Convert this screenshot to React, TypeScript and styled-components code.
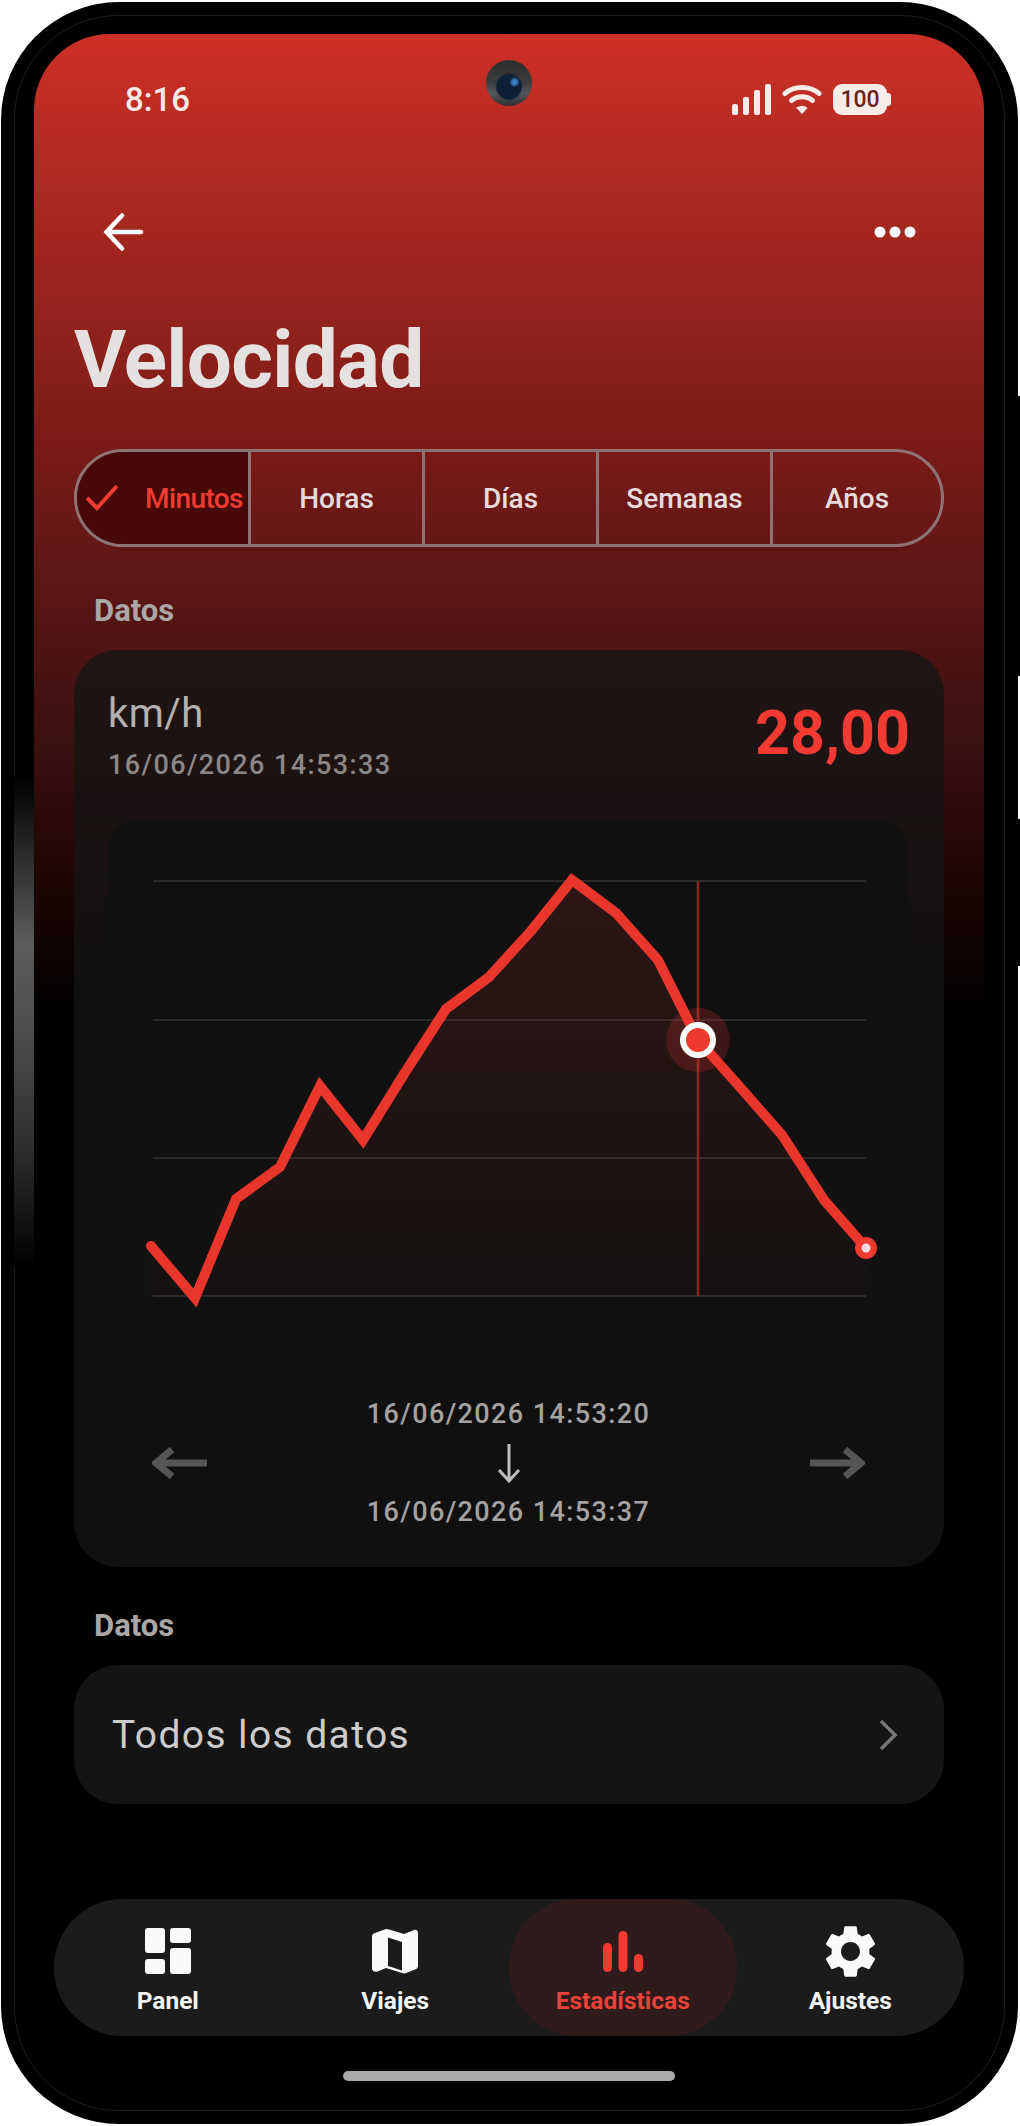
import React from 'react'
import styled, { createGlobalStyle } from 'styled-components'
import { MdSettings } from 'react-icons/md'

const GlobalStyle = createGlobalStyle`
  html, body {
    margin: 0;
    padding: 0;
    background: #fff;
  }
  * {
    box-sizing: border-box;
  }
`

const Page = styled.div`
  width: 1020px;
  height: 2126px;
  padding: 2px 2px 2px 1px;
  background: #fff;
  font-family: Roboto, "Liberation Sans", sans-serif;
`

const Phone = styled.div`
  position: relative;
  width: 1017px;
  height: 2122px;
  padding: 32px 34px 32px 33px;
  background: #000;
  border-radius: 118px;
`

const BezelLine = styled.div`
  position: absolute;
  inset: 13px;
  border: 1px solid #1e1e1e;
  border-radius: 104px;
  pointer-events: none;
`

const BezelGlow = styled.div`
  position: absolute;
  left: 13px;
  top: 775px;
  width: 20px;
  height: 490px;
  background: linear-gradient(180deg, #000 0%, #3b3b3b 22%, #5c5c5c 34%, #4a4a4a 55%, #2a2a2a 78%, #000 100%);
`

const SideButton = styled.div<{ $top: number; $height: number }>`
  position: absolute;
  right: -2px;
  top: ${props => props.$top}px;
  width: 3px;
  height: ${props => props.$height}px;
  background: #000;
`

const Screen = styled.div`
  position: relative;
  height: 100%;
  padding: 0 40px;
  display: flex;
  flex-direction: column;
  border-radius: 76px;
  overflow: hidden;
  background: linear-gradient(180deg, #cd2f26 0px, #a72820 180px, #7c1b18 400px, #551514 580px, #3d1110 700px, #230706 820px, #0f0202 920px, #000 975px);
`

const StatusBar = styled.div`
  height: 130px;
  padding: 0 93px 0 91px;
  margin: 0 -40px;
  display: flex;
  align-items: center;
  justify-content: space-between;
  color: #f6e9e7;
  font-size: 33px;
  font-weight: 500;
`

const StatusIcons = styled.div`
  display: flex;
  align-items: center;
  gap: 11px;
`

const Battery = styled.div`
  position: relative;
  width: 54px;
  height: 31px;
  margin-right: 4px;
  border-radius: 9px;
  background: #f8ece9;
  color: #6b2320;
  font-size: 23px;
  font-weight: 500;
  line-height: 31px;
  text-align: center;
  &::after {
    content: '';
    position: absolute;
    right: -4px;
    top: 9px;
    width: 4px;
    height: 13px;
    border-radius: 0 3px 3px 0;
    background: #f8ece9;
  }
`

const Camera = styled.div`
  position: absolute;
  left: 452px;
  top: 26px;
  width: 46px;
  height: 46px;
  border-radius: 50%;
  background:
    radial-gradient(circle at 62% 48%, #4a93d4 0, #2f6ea8 3px, transparent 5px),
    radial-gradient(circle at 50% 58%, #0e2036 0, #0e2036 12px, transparent 14px),
    linear-gradient(180deg, #2a2c2e 0%, #3c3e40 50%, #55585a 72%, #2c2e30 100%);
`

const TopBar = styled.div`
  height: 136px;
  padding: 0 27px 0 26px;
  display: flex;
  align-items: center;
  justify-content: space-between;
`

const Title = styled.h1`
  margin: 0;
  height: 114px;
  padding-top: 11px;
  font-size: 80px;
  line-height: 98px;
  font-weight: 700;
  letter-spacing: -0.7px;
  color: #e4e1e0;
`

const Segments = styled.div`
  height: 98px;
  margin-top: 35px;
  display: grid;
  grid-template-columns: 171px repeat(3, 174px) 171px;
  border: 3px solid #8d7473;
  border-radius: 49px;
  overflow: hidden;
`

const Segment = styled.div<{ $active?: boolean }>`
  display: flex;
  align-items: center;
  justify-content: ${props => (props.$active ? 'flex-start' : 'center')};
  gap: 27px;
  padding-left: ${props => (props.$active ? '9px' : '0')};
  border-left: ${props => (props.$active ? 'none' : '3px solid #8d7473')};
  background: ${props => (props.$active ? '#470907' : 'transparent')};
  color: ${props => (props.$active ? '#ee3c34' : '#e6dcdb')};
  font-size: 28px;
  font-weight: 500;
  letter-spacing: ${props => (props.$active ? '-0.6px' : '0')};
  white-space: nowrap;
`

const SectionLabel = styled.div`
  height: 40px;
  padding-left: 20px;
  color: #aba7a7;
  font-size: 31px;
  font-weight: 700;
  line-height: 40px;
`

const DataLabel = styled(SectionLabel)`
  margin-top: 44px;
  margin-bottom: 19px;
`

const LowerLabel = styled(SectionLabel)`
  margin-top: 39px;
  margin-bottom: 19px;
`

const Card = styled.div`
  height: 917px;
  padding: 34px 36px 0 34px;
  border-radius: 44px;
  background: rgba(21, 21, 21, 0.78);
`

const CardHead = styled.div`
  height: 136px;
  display: flex;
  justify-content: space-between;
`

const Unit = styled.div`
  margin-top: 2px;
  color: #b4b1b1;
  font-size: 40px;
  line-height: 56px;
  letter-spacing: 0.5px;
`

const Stamp = styled.div`
  margin-top: 6px;
  color: #8b8787;
  font-size: 27px;
  font-weight: 500;
  line-height: 34px;
  letter-spacing: 1.4px;
`

const Reading = styled.div`
  margin-top: 15px;
  margin-right: -2px;
  color: #f13a32;
  font-size: 61px;
  font-weight: 700;
  line-height: 68px;
`

const ChartPanel = styled.div`
  height: 540px;
  border-radius: 30px;
  background: linear-gradient(180deg, #101010 0%, #111 85%, rgba(20, 20, 20, 0) 100%);
`

const ChartSvg = styled.svg`
  display: block;
  width: 800px;
  height: 520px;
`

const RangeRow = styled.div`
  height: 150px;
  margin-top: 28px;
  padding: 0 43px 0 44px;
  display: flex;
  align-items: center;
  justify-content: space-between;
`

const RangeDates = styled.div`
  display: flex;
  flex-direction: column;
  align-items: center;
  color: #a5a2a2;
  font-size: 27px;
  font-weight: 500;
  line-height: 34px;
  letter-spacing: 1.4px;
`

const DownArrow = styled.svg`
  display: block;
  margin: 12px 0;
`

const WideArrow = styled.svg<{ $flip?: boolean }>`
  transform: ${props => (props.$flip ? 'scaleX(-1)' : 'none')};
`

const ListRow = styled.div`
  height: 139px;
  padding: 0 46px 0 38px;
  display: flex;
  align-items: center;
  justify-content: space-between;
  border-radius: 44px;
  background: #141414;
  color: #cdcbcb;
  font-size: 39px;
  letter-spacing: 1.4px;
`

const Nav = styled.div`
  height: 137px;
  margin: 95px -20px 0;
  display: grid;
  grid-template-columns: repeat(4, 1fr);
  border-radius: 68px;
  background: #1b1b1b;
`

const NavItem = styled.div<{ $active?: boolean }>`
  display: flex;
  flex-direction: column;
  align-items: center;
  justify-content: flex-start;
  padding-top: 25px;
  height: 137px;
  border-radius: 68px;
  background: ${props => (props.$active ? '#2f1b1b' : 'transparent')};
  color: ${props => (props.$active ? '#e8423a' : '#f4f4f4')};
  font-size: 24.5px;
  font-weight: 700;
`

const NavIcon = styled.div`
  width: 54px;
  height: 54px;
  margin-bottom: 8px;
  display: flex;
  align-items: center;
  justify-content: center;
  svg {
    flex-shrink: 0;
  }
`

const HomeBar = styled.div`
  width: 332px;
  height: 10px;
  margin: 35px auto 0;
  border-radius: 5px;
  background: #a9a9a9;
`

const points = [
  [43, 426], [87, 478], [128, 379], [172, 347], [212, 266], [255, 320], [296, 254],
  [338, 189], [381, 157], [423, 111], [464, 60], [508, 93], [550, 140], [590, 220],
  [631, 266], [674, 315], [716, 380], [758, 428],
]

const line = points.map(p => p.join(',')).join(' ')
const area = `43,476 ${line} 758,476`

const Chart = () => (
  <ChartSvg viewBox="0 0 800 520">
    <defs>
      <linearGradient id="fill" x1="0" y1="0" x2="0" y2="1">
        <stop offset="0" stopColor="#f0392f" stopOpacity="0.13" />
        <stop offset="1" stopColor="#f0392f" stopOpacity="0.02" />
      </linearGradient>
    </defs>
    {[61, 200, 338, 476].map(y => (
      <line key={y} x1="45" x2="758" y1={y} y2={y} stroke="#2a2a2a" strokeWidth="2" />
    ))}
    <polygon points={area} fill="url(#fill)" />
    <line x1="590" x2="590" y1="61" y2="476" stroke="#8c2823" strokeWidth="2.5" />
    <polyline points={line} fill="none" stroke="#e9362d" strokeWidth="10" strokeLinecap="round" strokeLinejoin="miter" />
    <circle cx="590" cy="220" r="32" fill="#f0392f" fillOpacity="0.2" />
    <circle cx="590" cy="220" r="15" fill="#f0392f" stroke="#fff" strokeWidth="6" />
    <circle cx="758" cy="428" r="11" fill="#f0392f" />
    <circle cx="758" cy="428" r="4.5" fill="#f3dcda" />
  </ChartSvg>
)

const PagerArrow = ({ flip }: { flip?: boolean }) => (
  <WideArrow $flip={flip} width="56" height="32" viewBox="0 0 56 32" fill="none">
    <path d="M55 16H5M20 2.5 4 16l16 13.5" stroke="#555" strokeWidth="7" />
  </WideArrow>
)

const PanelIcon = () => (
  <svg width="46" height="46" viewBox="0 0 46 46" fill="#fafafa">
    <rect x="0" y="0" width="20" height="25" rx="3" />
    <rect x="25" y="0" width="21" height="15" rx="3" />
    <rect x="0" y="31" width="20" height="15" rx="3" />
    <rect x="25" y="20" width="21" height="26" rx="3" />
  </svg>
)

const MapIcon = () => (
  <svg width="46" height="46" viewBox="0 0 46 46" fill="#fafafa">
    <path fillRule="evenodd" d="M3 5 14 1l3 .6L32 6l10-4c2-.6 4 .6 4 3v33c0 1.600-1 2.800-2.400 3.300L33 45.500l-3-.5-16-5-8.500 3.600C3 44.500 0 43 0 40.500V8c0-1.300 1.300-2.500 3-3ZM16 9.500v28.500l14 4.500V14L16 9.500Z" />
  </svg>
)

const BarsIcon = () => (
  <svg width="40" height="41" viewBox="0 0 40 41" fill="#f23a30">
    <rect x="0" y="12" width="9" height="29" rx="4.5" />
    <rect x="15.500" y="0" width="9" height="41" rx="4.5" />
    <rect x="31" y="23" width="9" height="18" rx="4.5" />
  </svg>
)

export default function App() {
  return (
    <>
      <GlobalStyle />
      <Page>
        <Phone>
          <BezelLine />
          <BezelGlow />
          <SideButton $top={394} $height={280} />
          <SideButton $top={817} $height={147} />
          <Screen>
            <Camera />
            <StatusBar>
              <span>8:16</span>
              <StatusIcons>
                <svg width="39" height="31" viewBox="0 0 39 31" fill="#f8ece9">
                  <rect x="0" y="20" width="6" height="11" rx="2" />
                  <rect x="11" y="13" width="6" height="18" rx="2" />
                  <rect x="22" y="6" width="6" height="25" rx="2" />
                  <rect x="33" y="0" width="6" height="31" rx="2" />
                </svg>
                <svg width="40" height="31" viewBox="0 0 40 31" fill="none" stroke="#f8ece9" strokeWidth="5" strokeLinecap="round">
                  <path d="M3 9.500C12 1.500 28 1.500 37 9.500" />
                  <path d="M9.500 16.500c6-5 15-5 21 0" />
                  <path d="M15 24 20 29.500 25 24c-3-2.300-7-2.300-10 0Z" fill="#f8ece9" strokeWidth="1" />
                </svg>
                <Battery>100</Battery>
              </StatusIcons>
            </StatusBar>
            <TopBar>
              <svg width="44" height="42" viewBox="0 0 44 42" fill="none" stroke="#fff" strokeWidth="4.500" strokeLinecap="round">
                <path d="M41 21H8M22 4.500 6.500 21 22 37.500" />
              </svg>
              <svg width="44" height="14" viewBox="0 0 44 14" fill="#fff">
                <circle cx="7" cy="7" r="5.500" />
                <circle cx="22" cy="7" r="5.500" />
                <circle cx="37" cy="7" r="5.500" />
              </svg>
            </TopBar>
            <Title>Velocidad</Title>
            <Segments>
              <Segment $active>
                <svg width="32" height="26" viewBox="0 0 32 26" fill="none" stroke="#ee3c34" strokeWidth="4">
                  <path d="M1 13 11 23 31 1" />
                </svg>
                Minutos
              </Segment>
              <Segment>Horas</Segment>
              <Segment>Días</Segment>
              <Segment>Semanas</Segment>
              <Segment>Años</Segment>
            </Segments>
            <DataLabel>Datos</DataLabel>
            <Card>
              <CardHead>
                <div>
                  <Unit>km/h</Unit>
                  <Stamp>16/06/2026 14:53:33</Stamp>
                </div>
                <Reading>28,00</Reading>
              </CardHead>
              <ChartPanel>
                <Chart />
              </ChartPanel>
              <RangeRow>
                <PagerArrow />
                <RangeDates>
                  <span>16/06/2026 14:53:20</span>
                  <DownArrow width="24" height="40" viewBox="0 0 24 40" fill="none" stroke="#bdbdbd" strokeWidth="3">
                    <path d="M12 1v36M2 27l10 11 10-11" />
                  </DownArrow>
                  <span>16/06/2026 14:53:37</span>
                </RangeDates>
                <PagerArrow flip />
              </RangeRow>
            </Card>
            <LowerLabel>Datos</LowerLabel>
            <ListRow>
              Todos los datos
              <svg width="20" height="34" viewBox="0 0 20 34" fill="none" stroke="#777" strokeWidth="3.500">
                <path d="M3 3l14 14L3 31" />
              </svg>
            </ListRow>
            <Nav>
              <NavItem>
                <NavIcon><PanelIcon /></NavIcon>
                Panel
              </NavItem>
              <NavItem>
                <NavIcon><MapIcon /></NavIcon>
                Viajes
              </NavItem>
              <NavItem $active>
                <NavIcon><BarsIcon /></NavIcon>
                Estadísticas
              </NavItem>
              <NavItem>
                <NavIcon><MdSettings size={63} color="#fafafa" /></NavIcon>
                Ajustes
              </NavItem>
            </Nav>
            <HomeBar />
          </Screen>
        </Phone>
      </Page>
    </>
  )
}
